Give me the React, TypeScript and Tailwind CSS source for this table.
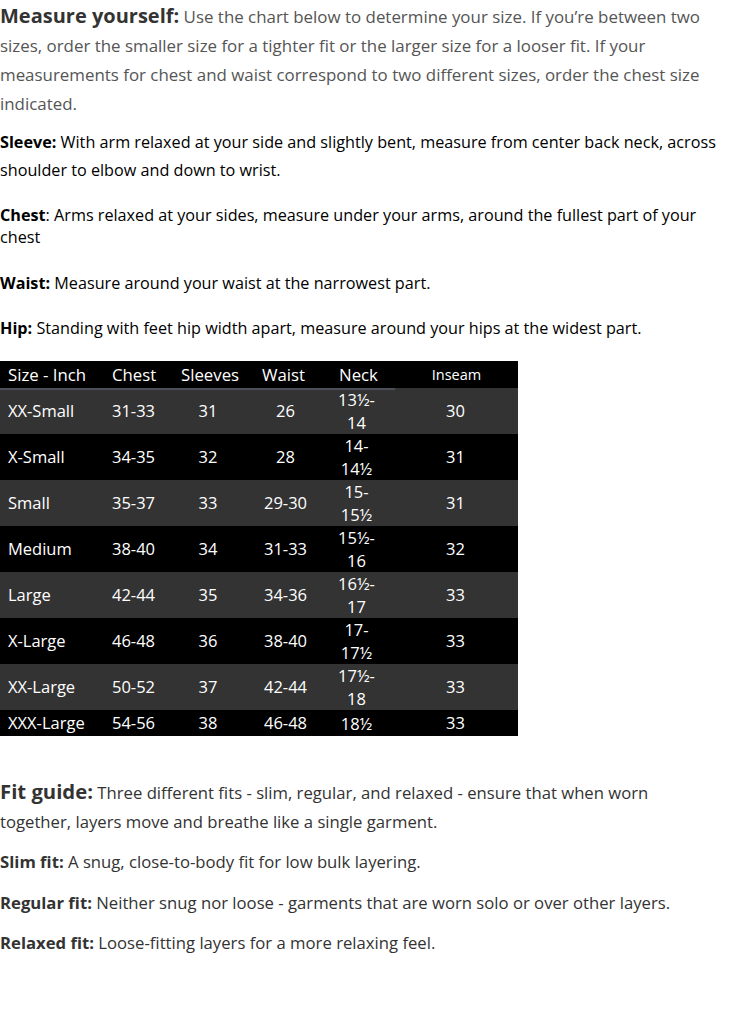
const rows: { size: string; chest: string; sleeves: string; waist: string; neck: string[]; inseam: string }[] = [
  { size: 'XX-Small', chest: '31-33', sleeves: '31', waist: '26', neck: ['13½-', '14'], inseam: '30' },
  { size: 'X-Small', chest: '34-35', sleeves: '32', waist: '28', neck: ['14-', '14½'], inseam: '31' },
  { size: 'Small', chest: '35-37', sleeves: '33', waist: '29-30', neck: ['15-', '15½'], inseam: '31' },
  { size: 'Medium', chest: '38-40', sleeves: '34', waist: '31-33', neck: ['15½-', '16'], inseam: '32' },
  { size: 'Large', chest: '42-44', sleeves: '35', waist: '34-36', neck: ['16½-', '17'], inseam: '33' },
  { size: 'X-Large', chest: '46-48', sleeves: '36', waist: '38-40', neck: ['17-', '17½'], inseam: '33' },
  { size: 'XX-Large', chest: '50-52', sleeves: '37', waist: '42-44', neck: ['17½-', '18'], inseam: '33' },
  { size: 'XXX-Large', chest: '54-56', sleeves: '38', waist: '46-48', neck: ['18½'], inseam: '33' },
]

const cols = 'grid grid-cols-[104px_69px_77px_68px_77px_123px]'

function SizeTable() {
  return (
    <div className="mt-[22px] w-[518px] text-[16.5px] text-white">
      <div className={`${cols} h-[27px] items-center bg-black text-[16.8px]`}>
        <div className="h-full border-b-2 border-[#4b4f57] pl-2 leading-[27px]">Size - Inch</div>
        <div className="h-full border-b-2 border-[#4b4f57] pl-2 leading-[27px]">Chest</div>
        <div className="h-full border-b-2 border-[#4b4f57] pl-2 leading-[27px]">Sleeves</div>
        <div className="h-full border-b-2 border-[#4b4f57] pl-3 leading-[27px]">Waist</div>
        <div className="h-full border-b-2 border-[#4b4f57] pl-[21px] leading-[27px]">Neck</div>
        <div className="h-full text-center text-[14.5px] leading-[27px]">Inseam</div>
      </div>
      {rows.map((r, i) => {
        const last = i === rows.length - 1
        return (
          <div
            key={r.size}
            className={`${cols} items-center ${last ? 'h-[26px]' : 'h-[46px]'} ${i % 2 === 0 ? 'bg-[#333333]' : 'bg-black'}`}
          >
            <div className="pl-2">{r.size}</div>
            <div className="pl-2">{r.chest}</div>
            <div className="pr-[7px] text-center">{r.sleeves}</div>
            <div className="pl-[3px] text-center">{r.waist}</div>
            <div className="text-center leading-[23px]">
              {r.neck.map((n) => (
                <div key={n}>{n}</div>
              ))}
            </div>
            <div className="pr-[2px] text-center">{r.inseam}</div>
          </div>
        )
      })}
    </div>
  )
}

export default function App() {
  return (
    <div className="w-full overflow-hidden bg-white">
      <div className="w-[760px] whitespace-nowrap font-['Open_Sans',sans-serif] text-[16.2px]">
        <p className="pt-[1px] text-[16.9px] leading-[29px] text-[#555555]">
          <span className="text-[20px] font-bold text-[#333333]">Measure yourself:</span> Use the chart below to
          determine your size. If you’re between two
          <br />
          sizes, order the smaller size for a tighter fit or the larger size for a looser fit. If your
          <br />
          measurements for chest and waist correspond to two different sizes, order the chest size
          <br />
          indicated.
        </p>
        <p className="mt-[10px] leading-[28px] text-black">
          <b>Sleeve:</b> With arm relaxed at your side and slightly bent, measure from center back neck, across
          <br />
          shoulder to elbow and down to wrist.
        </p>
        <p className="mt-5 leading-[22px] text-black">
          <b>Chest</b>: Arms relaxed at your sides, measure under your arms, around the fullest part of your
          <br />
          chest
        </p>
        <p className="mt-6 leading-[22px] text-black">
          <b>Waist:</b> Measure around your waist at the narrowest part.
        </p>
        <p className="mt-[23px] leading-[22px] text-black">
          <b>Hip:</b> Standing with feet hip width apart, measure around your hips at the widest part.
        </p>

        <SizeTable />

        <div className="text-[16.7px] text-[#333333]">
          <p className="mt-[41px] leading-[29px]">
            <span className="text-[20.3px] font-bold">Fit guide:</span> Three different fits - slim, regular, and
            relaxed - ensure that when worn
            <br />
            together, layers move and breathe like a single garment.
          </p>
          <p className="mt-[11px] leading-[29px]">
            <b>Slim fit:</b> A snug, close-to-body fit for low bulk layering.
          </p>
          <p className="mt-3 leading-[29px]">
            <b>Regular fit:</b> Neither snug nor loose - garments that are worn solo or over other layers.
          </p>
          <p className="mt-[11px] leading-[29px]">
            <b>Relaxed fit:</b> Loose-fitting layers for a more relaxing feel.
          </p>
        </div>
        <div className="h-[64px]" />
      </div>
    </div>
  )
}
